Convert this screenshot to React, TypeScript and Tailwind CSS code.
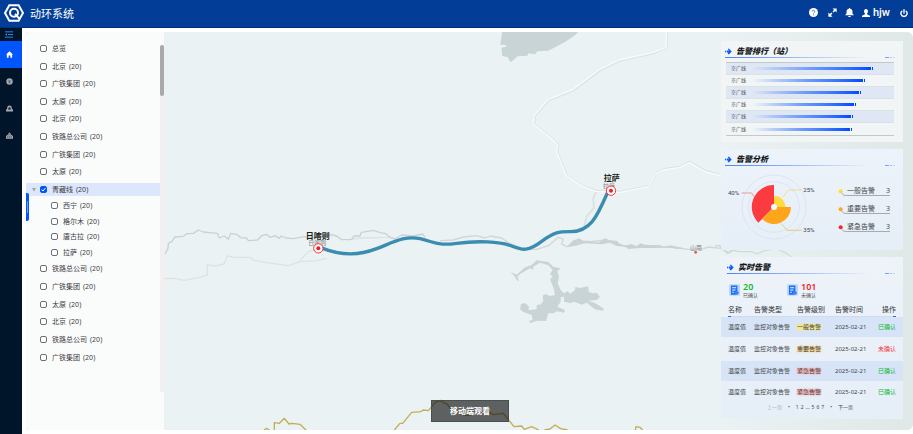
import { useState } from "react";
import { Power } from "lucide-react";

type Station = { name: string; count?: number };

const topGroup: Station[] = [
  { name: "总览" },
  { name: "北京", count: 20 },
  { name: "广铁集团", count: 20 },
  { name: "太原", count: 20 },
  { name: "北京", count: 20 },
  { name: "铁路总公司", count: 20 },
  { name: "广铁集团", count: 20 },
  { name: "太原", count: 20 },
  { name: "青藏线", count: 20 },
];
const childGroup: Station[] = [
  { name: "西宁", count: 20 },
  { name: "格尔木", count: 20 },
  { name: "唐古拉", count: 20 },
  { name: "拉萨", count: 20 },
];
const bottomGroup: Station[] = [
  { name: "铁路总公司", count: 20 },
  { name: "广铁集团", count: 20 },
  { name: "太原", count: 20 },
  { name: "北京", count: 20 },
  { name: "铁路总公司", count: 20 },
  { name: "广铁集团", count: 20 },
];

const ranking = [
  { name: "京广线", value: 84 },
  { name: "京广线", value: 78 },
  { name: "京广线", value: 75 },
  { name: "京广线", value: 72 },
  { name: "京广线", value: 70 },
  { name: "京广线", value: 69 },
];

const legend = [
  { label: "一般告警", count: 3, color: "#ffdc32" },
  { label: "重要告警", count: 3, color: "#ffa516" },
  { label: "紧急告警", count: 3, color: "#f8242b" },
];

const levelStyles: Record<string, string> = {
  一般告警: "bg-[#f3e690] shadow-[0_0_2px_#f3e690]",
  重要告警: "bg-[#f5d795] shadow-[0_0_2px_#f5d795]",
  紧急告警: "bg-[#f3b4b8] shadow-[0_0_2px_#f3b4b8]",
};

const alarms = [
  { name: "温度值", type: "监控对象告警", level: "一般告警", date: "2025-02-21", done: true },
  { name: "温度值", type: "监控对象告警", level: "重要告警", date: "2025-02-21", done: false },
  { name: "温度值", type: "监控对象告警", level: "紧急告警", date: "2025-02-21", done: true },
  { name: "温度值", type: "监控对象告警", level: "紧急告警", date: "2025-02-21", done: true },
];

function Logo() {
  return (
    <svg viewBox="0 0 60 54" className="h-[18px] w-5" fill="none" stroke="#fff">
      <path d="M24 4H16L3 27L16 50H24" strokeWidth="6" />
      <path d="M24 4H44L57 27L50 39M24 50H44L50 39" strokeWidth="6" />
      <circle cx="30" cy="26" r="12" strokeWidth="6" />
      <path d="M33 30L46 44" strokeWidth="6" />
    </svg>
  );
}

function Header() {
  return (
    <header className="flex h-7 items-center border-b border-[#022f7c] bg-[#023e97] pr-[5px] pb-[2px] pl-1 text-white">
      <Logo />
      <h1 className="ml-[6px] pt-[2px] text-[11px] leading-none">动环系统</h1>

      <div className="ml-auto flex items-center">
        <button aria-label="帮助" className="mr-[10px]">
          <svg viewBox="0 0 24 24" className="size-[9px]">
            <circle cx="12" cy="12" r="12" fill="#fff" />
            <path
              d="M8.500 9.500a3.500 3.500 0 1 1 5 3.200c-1 .5-1.500 1-1.500 2"
              fill="none"
              stroke="#4a74bb"
              strokeWidth="2.400"
            />
            <circle cx="12" cy="18" r="1.500" fill="#4a74bb" />
          </svg>
        </button>
        <button aria-label="全屏" className="mr-2">
          <svg viewBox="0 0 24 24" className="size-[9px]" fill="#fff" stroke="#fff">
            <path d="M12 1H23V12ZM1 12V23H12Z" stroke="none" />
            <path d="M19 5L13.500 10.500M10.500 13.500L5 19" strokeWidth="4" />
          </svg>
        </button>
        <button aria-label="通知" className="mr-2">
          <svg viewBox="0 0 24 24" className="size-[9px]" fill="#fff">
            <path d="M12 0a2 2 0 0 1 2 2C18 3 20 6 20 10V15L23 18V19H1V18L4 15V10C4 6 6 3 10 2A2 2 0 0 1 12 0ZM8 21H16L14 24H10Z" />
          </svg>
        </button>
        <button className="mr-[10px] flex items-center gap-[3px]">
          <svg viewBox="0 0 24 24" className="size-2" fill="#fff">
            <path d="M12 0C16 0 18 3 18 7C18 10 17 12 15 14V16L24 20V24H0V20L9 16V14C7 12 6 10 6 7C6 3 8 0 12 0Z" />
          </svg>
          <span className="font-['Roboto'] text-[11px] leading-none font-medium">hjw</span>
        </button>
        <button aria-label="退出">
          <Power className="size-2" strokeWidth={4} />
        </button>
      </div>
    </header>
  );
}

function NavRail() {
  return (
    <nav className="flex w-[22px] shrink-0 flex-col bg-[#001529]">
      <button aria-label="折叠菜单" className="grid h-[13px] place-items-center pr-1">
        <svg viewBox="0 0 24 20" className="h-[7px] w-2" stroke="#1c8cf0" strokeWidth="3" fill="#1c8cf0">
          <path d="M0 2H24M9 10H24M0 18H24" />
          <path d="M6 6V14L0 10Z" stroke="none" />
        </svg>
      </button>
      <a href="#home" aria-label="首页" className="grid h-[27px] place-items-center bg-[#0254fb] pr-1">
        <svg viewBox="0 0 24 24" className="size-[7px]" fill="#fff">
          <path d="M12 1L24 12H21V23H15V15H9V23H3V12H0Z" />
        </svg>
      </a>
      <a href="#info" aria-label="信息" className="grid h-[27px] place-items-center pr-1">
        <svg viewBox="0 0 24 24" className="size-[7px]">
          <circle cx="12" cy="12" r="11" fill="#a3a9af" />
          <path d="M8 7L12 11L16 7M12 11V18M8 14H16" stroke="#33445a" strokeWidth="2" fill="none" />
        </svg>
      </a>
      <a href="#alarm" aria-label="告警" className="grid h-[27px] place-items-center pr-1">
        <svg viewBox="0 0 24 24" className="size-[7px]">
          <path d="M4 13V10a8 8 0 0 1 16 0V13L24 16V22H0V16Z" fill="#a3a9af" />
          <path d="M8 12a4 4 0 0 1 8 0V16H8Z" fill="#1b2d41" />
        </svg>
      </a>
      <a href="#devices" aria-label="设备" className="grid h-[27px] place-items-center pr-1">
        <svg viewBox="0 0 24 24" className="size-[7px]">
          <path d="M5 10L12 1L19 10L24 14V23H0V14Z" fill="#a3a9af" />
          <path d="M9 10L12 7L15 10M6 20V15L9 13M12 20V15M18 20V15L15 13" stroke="#1b2d41" strokeWidth="2" fill="none" />
        </svg>
      </a>
    </nav>
  );
}

function TreeRow({ name, count, nested = false }: Station & { nested?: boolean }) {
  const [checked, setChecked] = useState(name === "青藏线");

  return (
    <li className="flex items-center">
      <label
        className={`flex h-[13px] flex-1 items-center gap-[5px] text-[7px] leading-none text-[#3c4043] ${
          nested ? "pl-[25px]" : checked ? "bg-[#dce6fc] pl-[6px]" : "pl-[14px]"
        }`}
      >
        {checked && !nested && (
          <svg viewBox="0 0 10 10" className="-mr-px h-[5px] w-1" fill="#a5a5a5">
            <path d="M0 1H10L5 10Z" />
          </svg>
        )}
        <span className="grid size-[7px]">
          <input
            type="checkbox"
            checked={checked}
            onChange={() => setChecked(!checked)}
            className="col-start-1 row-start-1 size-[7px] appearance-none rounded-[2px] border border-[#6c7073] bg-white checked:border-[#0254fb] checked:bg-[#0254fb]"
          />
          {checked && (
            <svg viewBox="0 0 14 14" className="pointer-events-none col-start-1 row-start-1 size-[7px]">
              <path d="M3 7L6 10L11 4" stroke="#fff" strokeWidth="2" fill="none" />
            </svg>
          )}
        </span>
        <span className="flex gap-[3px]">
          <span>{name}</span>
          {count && <span>({count})</span>}
        </span>
      </label>
    </li>
  );
}

function StationTree() {
  return (
    <aside className="relative flex w-[138px] shrink-0 rounded-l-sm bg-[#fafcfc]">
      <div className="flex-1 pt-2">
        <ul className="grid h-[158px] auto-rows-fr">
          {topGroup.map((item, i) => (
            <TreeRow key={i} {...item} />
          ))}
        </ul>
        <ul className="grid h-[62px] auto-rows-fr">
          {childGroup.map((item) => (
            <TreeRow key={item.name} {...item} nested />
          ))}
        </ul>
        <ul className="grid h-[106px] auto-rows-fr">
          {bottomGroup.map((item, i) => (
            <TreeRow key={i} {...item} />
          ))}
        </ul>
      </div>

      {/* SCROLLBAR */}
      <div className="mt-[13px] mb-[38px] w-1 bg-[#f3eff0]">
        <div className="h-[51px] rounded-full bg-[#a9a9a9]" />
      </div>

      {/* DRAWER HANDLE */}
      <button
        aria-label="收起"
        className="absolute top-[161px] left-0 grid h-7 w-[3px] place-items-center rounded-r-[2px] bg-[#0254fb]"
      >
        <span className="h-3 w-px bg-[#6b9bff]" />
      </button>
    </aside>
  );
}

function Marker({ x, y }: { x: number; y: number }) {
  return (
    <g>
      <circle cx={x} cy={y} r="14" fill="#fff" stroke="#f5333a" strokeWidth="3" />
      <circle cx={x} cy={y} r="6" fill="#f01c24" />
    </g>
  );
}

function RouteMap() {
  return (
    <svg
      viewBox="78 96 2661 1194"
      preserveAspectRatio="xMidYMid slice"
      className="absolute inset-0 size-full"
      fill="none"
      strokeLinejoin="round"
    >
      {/* ROADS */}
      <g stroke="#dde2e2" strokeWidth="6" transform="translate(1320 84)">
        <path d="M682 8L680 58L640 76L540 98L480 127L400 187L325 218L285 262L282 288L330 326L355 350L352 372L380 442L425 473L470 488L540 491L630 473L648 435L670 424L720 416L748 402L800 430L838 440" />
        <path d="M470 488L460 510L462 540L440 565L432 600" />
      </g>
      <g stroke="#fafcfc" strokeWidth="4" transform="translate(1320 84)">
        <path d="M680 8L678 58L638 74L538 96L478 125L398 185L323 216L283 262L280 288L328 326L353 350L350 372L378 442L423 473L468 490L540 493L628 475L646 437L670 426L720 418L748 404L798 432L838 442L880 450" />
      </g>
      <g stroke="#dde3e3" strokeWidth="4" transform="translate(480 540)">
        <path d="M12 296L45 295L72 301L120 292L142 285L142 255L165 258L192 252L202 228L225 232L270 232L285 242L320 248L385 257L420 245L470 242L500 235M420 242L445 215L480 205" />
        <path d="M560 180L600 174L700 172" />
      </g>

      {/* RIVERS */}
      <path
        transform="translate(480 540)"
        stroke="#c8d2d4"
        strokeWidth="4"
        d="M15 222L24 205L25 190L36 184L45 171L70 169L80 161L100 160L115 150L130 156L172 160L178 174L193 168L205 178L212 160L232 164L242 173L260 174L265 182L292 180L305 167L320 163L330 172L345 167L358 175L362 168L378 174L400 176L435 170L470 174L515 164L530 168L545 179L575 178L582 168L600 168L604 157L640 151L660 158L675 160L690 172L705 177L725 165L760 168L788 162L795 172"
      />
      <path
        transform="translate(1320 450)"
        stroke="#cfd7d8"
        strokeWidth="4"
        d="M0 272L40 270L70 261L110 257L135 264L150 258L185 264L205 278L250 297L290 298L325 287L355 262L370 268L365 282L380 290L400 286L450 275L500 270L560 290L620 287L700 292L745 298L790 296L805 291L845 295M852 300L862 310L876 304"
      />
      <path
        transform="translate(1320 450)"
        fill="#c9d3d4"
        d="M382 289L400 271L418 265L430 272L445 272L460 277L478 277L495 265L508 271L530 272L540 284L560 286L575 282L590 290L600 280L616 284L640 286L660 285L670 292L690 286L712 290L735 295L715 297L690 293L640 294L600 294L565 297L555 290L530 288L510 278L485 283L455 281L430 279L405 288Z"
      />
      <path
        transform="translate(2145 750)"
        stroke="#ced6d7"
        strokeWidth="4"
        d="M0 -12L15 -14L18 -3L42 8L50 0L70 5L110 5L125 12L150 2L185 -4L215 10L230 22M562 92L575 90L582 70L600 64"
      />

      {/* LAKES */}
      <g fill="#c9d4d6">
        <path
          transform="translate(1320 84)"
          d="M187 8L181 50L198 51L199 56L184 59L187 84L203 88L212 103L233 85L262 83L265 76L285 79L293 70L325 68L375 42L405 22L418 8Z"
        />
        <path
          transform="translate(1320 450)"
          d="M212 366L230 374L255 352L275 345L290 331L325 336L340 350L362 355L352 364L357 380L353 400L362 420L372 430L384 423L390 432L405 420L406 411L420 414L445 409L446 425L458 430L470 428L480 440L470 450L445 452L466 460L490 475L491 483L465 478L440 458L425 464L410 458L398 455L394 460L372 455L372 440L362 442L362 455L352 470L375 480L372 488L350 484L340 490L325 490L318 513L290 512L270 520L268 512L278 510L275 495L250 486L240 478L243 463L255 459L268 470L265 480L290 478L290 465L303 463L310 452L308 437L316 432L330 438L345 435L342 418L335 400L330 388L338 380L330 372L338 360L325 346L300 338L280 350L280 360L270 355L240 372L232 380L237 394L230 390L225 380Z"
        />
      </g>

      {/* BORDERS */}
      <g stroke="#c3ad55" strokeWidth="4">
        <path
          transform="translate(480 540)"
          d="M312 750L320 745L328 750M343 752V728L358 730L373 715L387 732L396 730L420 733L440 752M703 750L720 730L728 730L755 697L782 695L790 690L805 692L825 668L845 660"
        />
        <path
          transform="translate(1320 450)"
          d="M0 752L22 763L38 785L80 797L145 785L160 794L190 790L222 830L245 828L253 838L275 830L297 840M313 840L330 837L345 825L362 836L383 840M586 840L588 830L600 832L608 840"
        />
      </g>

      {/* ROUTE */}
      <path
        stroke="#3a8db1"
        strokeWidth="10"
        d="M960 742C1030 770 1080 765 1130 746S1215 706 1260 716S1310 738 1370 730S1500 724 1535 738S1585 754 1625 724S1680 695 1710 695C1775 697 1795 640 1825 572"
      />

      <g fontSize="18" fill="#7b7f80" textAnchor="middle">
        <text x="952" y="735">日喀则</text>
        <text x="1827" y="563">拉萨</text>
        <text x="2088" y="749">山南</text>
      </g>
      <Marker x={955} y={745} />
      <Marker x={1833} y={572} />
      <circle cx="2087" cy="757" r="4" fill="#ee4c4c" />
      <g fontSize="24" fontWeight="700" fill="#1d1f20" textAnchor="middle">
        <text x="953" y="717">日喀则</text>
        <text x="1835" y="543">拉萨</text>
      </g>
    </svg>
  );
}

function PanelTitle({ children }: { children: string }) {
  return (
    <div className="px-1">
      <h2 className="flex h-4 items-center gap-1 pt-1 text-[8px] leading-none font-black text-[#14171a] italic">
        <svg viewBox="0 0 22 20" className="size-[7px]" fill="#0b5cff">
          <path d="M0 8H4V12H0ZM9 1H13L21 10L13 19H9V13H6V7H9L12 10Z" />
        </svg>
        {children}
      </h2>
      <div className="flex h-px items-center gap-px pr-1">
        <span className="mr-[14px] h-px flex-1 bg-linear-to-r from-[#4c84f5] to-transparent" />
        <span className="h-px w-1 bg-[#79a3f8]" />
        <span className="h-px w-[2px] bg-[#a7c2f8]" />
        <span className="h-px w-[2px] bg-[#c5d6f8]" />
      </div>
    </div>
  );
}

function RankingPanel() {
  return (
    <section className="bg-[#f1f5f6] pb-[6px]">
      <PanelTitle>告警排行（站）</PanelTitle>
      <ul className="mt-1 mr-[9px] ml-[5px] border-y border-[#c3c9cb]">
        {ranking.map((item, i) => (
          <li
            key={i}
            className="flex h-3 items-center border-b border-[#dce1e6] pl-[5px] text-[5px] leading-none text-[#4a4d50] last:border-b-0 odd:bg-[#dfe7f4]"
          >
            <span className="w-[21px] shrink-0">{item.name}</span>
            <div className="flex flex-1 items-center gap-px">
              <span
                className="h-[3px] bg-linear-to-r from-transparent via-[#6f9bf8] to-[#0048ff]"
                style={{ width: `${item.value}%` }}
              />
              <span className="h-[3px] w-px bg-[#0048ff]" />
            </div>
          </li>
        ))}
      </ul>
    </section>
  );
}

function AnalysisPanel() {
  return (
    <section className="bg-linear-to-b from-[#edf3fa] to-[#e6eef7] pb-1">
      <PanelTitle>告警分析</PanelTitle>
      <div className="flex">
        <svg viewBox="0 0 300 240" className="h-20 w-[100px] shrink-0" fill="none">
          <g stroke="#d3dfee" strokeWidth="2">
            <circle cx="159" cy="123" r="96" />
            <circle cx="159" cy="123" r="76" />
          </g>
          <path d="M159 123V57A66 66 0 0 0 112 170Z" fill="#fc3b40" />
          <path d="M159 123V89A34 34 0 0 1 193 123Z" fill="#ffdc3c" />
          <path d="M159 123H210A51 51 0 0 1 123 159Z" fill="#ffa51c" />
          <circle cx="159" cy="123" r="9" fill="#f4f7fb" />
          <path d="M101 94L92 81H62" stroke="#f56a6e" strokeWidth="2" />
          <path d="M186 93L202 72H242" stroke="#f0d65a" strokeWidth="2" />
          <path d="M181 173L198 193H242" stroke="#f5b04a" strokeWidth="2" />
          <g fontSize="18" fill="#3f4347" className="font-['Roboto']">
            <text x="21" y="86">40%</text>
            <text x="247" y="77">25%</text>
            <text x="247" y="198">35%</text>
          </g>
        </svg>
        <ul className="mt-5 mr-[13px] ml-auto flex w-[52px] flex-col gap-2">
          {legend.map((item) => (
            <li key={item.label} className="flex h-[10px] text-[7px] leading-none text-[#45494d]">
              <svg viewBox="0 0 27 30" className="h-[10px] w-[9px] shrink-0" fill="none">
                <path d="M8 17L17 28H27" stroke="#a5abb2" strokeWidth="3" />
                <circle cx="8" cy="16" r="6" fill={item.color} />
              </svg>
              <span className="flex flex-1 items-center justify-between border-b border-[#a5abb2]">
                <span>{item.label}</span>
                <span>{item.count}</span>
              </span>
            </li>
          ))}
        </ul>
      </div>
    </section>
  );
}

function Stat({ value, label, color }: { value: number; label: string; color: string }) {
  return (
    <div className="flex w-[58px] items-center gap-[3px]">
      <svg viewBox="0 0 34 36" className="h-3 w-[11px]">
        <rect width="34" height="36" rx="4" fill="#bcd6fb" />
        <path d="M6 4H26V20L31 27L25 33H6Z" fill="#1a70f5" />
        <path d="M10 11H22M10 18H20M10 25H15" stroke="#fff" strokeWidth="3" />
        <circle cx="25" cy="27" r="4" fill="#0a56dc" stroke="#8fbafc" strokeWidth="2" />
      </svg>
      <div>
        <div className={`text-[9px] leading-[10px] font-semibold ${color}`}>{value}</div>
        <div className="text-[5px] leading-[6px] text-[#505458]">{label}</div>
      </div>
    </div>
  );
}

function AlarmPanel() {
  return (
    <section className="bg-linear-to-b from-[#eef3f9] to-[#e6eef8] pb-2">
      <div className="pl-[2px]">
        <PanelTitle>实时告警</PanelTitle>
      </div>
      <div className="mt-2 flex pl-2">
        <Stat value={20} label="已确认" color="text-[#12b832]" />
        <Stat value={101} label="未确认" color="text-[#f01c24]" />
      </div>

      <table className="mt-[5px] w-full table-fixed border-collapse text-[6px] leading-none text-[#43474b]">
        <thead>
          <tr className="h-[13px] text-left text-[7px] text-[#303438] [&>th]:p-0 [&>th]:font-normal">
            <th className="w-[33px]">
              <span className="ml-[7px] inline-block">名称</span>
            </th>
            <th className="w-[43px]">告警类型</th>
            <th className="w-[38px]">告警级别</th>
            <th>告警时间</th>
            <th className="w-[32px]">
              <span className="mr-[7px] block text-right">操作</span>
            </th>
          </tr>
          <tr aria-hidden="true">
            <td colSpan={5} className="p-0">
              <div className="mr-[7px] ml-[7px] flex justify-between bg-[#cfdcf0]">
                <span className="h-px w-[3px] bg-[#2d6df6]" />
                <span className="h-px w-[3px] bg-[#2d6df6]" />
              </div>
            </td>
          </tr>
        </thead>
        <tbody>
          {alarms.map((row, i) => (
            <tr key={i} className="h-6 last:h-[22px] odd:h-5 odd:bg-[#d7e4f7] [&>td]:p-0">
              <td>
                <span className="ml-[7px] inline-block">{row.name}</span>
              </td>
              <td>{row.type}</td>
              <td>
                <span className={`inline-block ${levelStyles[row.level]}`}>{row.level}</span>
              </td>
              <td>{row.date}</td>
              <td className="text-right">
                <button className={`mr-[7px] ${row.done ? "text-[#12b832]" : "text-[#f5333a]"}`}>
                  {row.done ? "已确认" : "未确认"}
                </button>
              </td>
            </tr>
          ))}
        </tbody>
      </table>

      <div className="flex h-2 items-center justify-center gap-[6px] pr-1 text-[5px] leading-none text-[#43474b]">
        <button className="text-[#a9afb5]">上一页</button>
        <span>•</span>
        <span className="flex gap-[2px]">
          <button>1</button>
          <button>2</button>
          <span>...</span>
          <button>5</button>
          <button>6</button>
          <button>7</button>
        </span>
        <span>•</span>
        <button>下一页</button>
      </div>
    </section>
  );
}

export default function App() {
  return (
    <div className="flex min-h-screen flex-col bg-white font-['Noto_Sans','Noto_Sans_CJK_SC',sans-serif]">
      <Header />
      <div className="flex flex-1">
        <NavRail />
        <main className="relative my-1 ml-1 flex flex-1 items-stretch justify-between overflow-hidden rounded-r-md bg-[#ebf2f3]">
          <RouteMap />
          <StationTree />

          {/* MOBILE VIEW */}
          <button className="absolute bottom-2 left-[405px] h-[22px] w-[78px] border border-[#4b4e4f] bg-black/60 text-[8px] leading-none font-bold text-white">
            移动端观看
          </button>

          <div className="relative flex w-[192px] shrink-0 flex-col gap-[7px] bg-linear-to-r from-transparent to-[#dfe7e7] pt-[9px] pr-[10px]">
            <RankingPanel />
            <AnalysisPanel />
            <AlarmPanel />
          </div>
        </main>
      </div>
    </div>
  );
}
